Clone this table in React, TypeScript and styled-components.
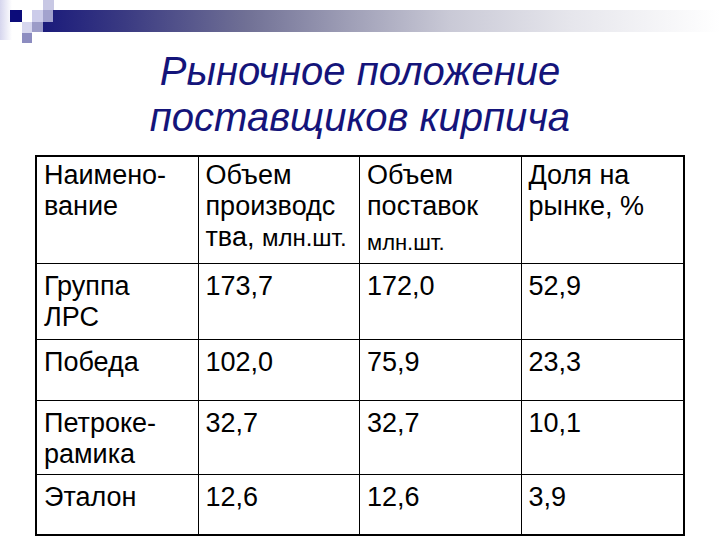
import React from "react";
import styled, { createGlobalStyle } from "styled-components";

const GlobalStyle = createGlobalStyle`
  html, body {
    margin: 0;
    padding: 0;
    background: #ffffff;
  }
  body {
    font-family: "Liberation Sans", Arial, sans-serif;
  }
`;

interface Row {
  name: string[];
  produced: string;
  supplied: string;
  share: string;
  height: number;
}

const rows: Row[] = [
  { name: ["Группа", "ЛРС"], produced: "173,7", supplied: "172,0", share: "52,9", height: 76 },
  { name: ["Победа"], produced: "102,0", supplied: "75,9", share: "23,3", height: 61 },
  { name: ["Петроке-", "рамика"], produced: "32,7", supplied: "32,7", share: "10,1", height: 74 },
  { name: ["Эталон"], produced: "12,6", supplied: "12,6", share: "3,9", height: 59 },
];

const Decoration: React.FC = () => (
  <DecorationSvg viewBox="0 0 720 44" width={720} height={44}>
    <defs>
      <linearGradient id="barFade" x1="0" y1="0" x2="1" y2="0">
        <stop offset="0" stopColor="#1b1b7b" />
        <stop offset="0.12" stopColor="#3a3a82" />
        <stop offset="0.3" stopColor="#707095" />
        <stop offset="0.45" stopColor="#9e9eb6" />
        <stop offset="0.6" stopColor="#c9c9d6" />
        <stop offset="0.78" stopColor="#e6e6ec" />
        <stop offset="1" stopColor="#ffffff" />
      </linearGradient>
      <linearGradient id="edgeFade" x1="0" y1="0" x2="1" y2="0">
        <stop offset="0" stopColor="#d6d6ee" />
        <stop offset="1" stopColor="#ffffff" />
      </linearGradient>
    </defs>
    <rect x="0" y="0" width="12" height="40" fill="url(#edgeFade)" />
    <rect x="43" y="0" width="11" height="10" fill="#c8c8e4" />
    <rect x="43" y="10" width="677" height="22" fill="url(#barFade)" />
    <rect x="10" y="10" width="12" height="12" fill="#0c0c7a" />
    <rect x="32" y="10" width="11" height="12" fill="#ccccea" />
    <rect x="43" y="10" width="10" height="12" fill="#a2a2ce" />
    <rect x="22" y="22" width="10" height="11" fill="#d6d6ee" />
    <rect x="32" y="22" width="11" height="10" fill="#9c9cc8" />
    <rect x="22" y="33" width="10" height="10" fill="#8c8cc0" />
  </DecorationSvg>
);

export default function App() {
  return (
    <>
      <GlobalStyle />
      <Slide>
        <Decoration />
        <Title>
          Рыночное положение
          <br />
          поставщиков кирпича
        </Title>
        <Table>
          <Cell $height={107}>
            Наимено-
            <br />
            вание
          </Cell>
          <Cell $height={107}>
            Объем
            <br />
            производс
            <br />
            тва, <Unit $size={24}>млн.шт.</Unit>
          </Cell>
          <Cell $height={107}>
            Объем
            <br />
            поставок
            <br />
            <Unit $size={22} $lower>млн.шт.</Unit>
          </Cell>
          <Cell $height={107} $last>
            Доля на
            <br />
            рынке, %
          </Cell>
          {rows.map((row, i) => {
            const bottom = i === rows.length - 1;
            return (
              <React.Fragment key={row.name.join("")}>
                <BodyCell $height={row.height} $bottom={bottom}>
                  {row.name.map((line, j) => (
                    <React.Fragment key={line}>
                      {j > 0 && <br />}
                      {line}
                    </React.Fragment>
                  ))}
                </BodyCell>
                <BodyCell $height={row.height} $bottom={bottom}>
                  {row.produced}
                </BodyCell>
                <BodyCell $height={row.height} $bottom={bottom}>
                  {row.supplied}
                </BodyCell>
                <BodyCell $height={row.height} $bottom={bottom} $last>
                  {row.share}
                </BodyCell>
              </React.Fragment>
            );
          })}
        </Table>
      </Slide>
    </>
  );
}

const Slide = styled.div`
  width: 720px;
  height: 540px;
  display: flex;
  flex-direction: column;
  overflow: hidden;
  background: #ffffff;
`;

const DecorationSvg = styled.svg`
  display: block;
  flex: none;
`;

const Title = styled.h1`
  margin: 4px 0 0;
  font-family: "Liberation Sans", Arial, sans-serif;
  font-style: italic;
  font-weight: 400;
  font-size: 40px;
  line-height: 46px;
  color: #14147a;
  text-align: center;
`;

const Table = styled.div`
  margin: 15px 0 0 35px;
  width: 650px;
  box-sizing: border-box;
  border: 2px solid #000000;
  display: grid;
  grid-template-columns: repeat(4, 1fr);
  font-family: "Liberation Sans", Arial, sans-serif;
  font-size: 27px;
  line-height: 31px;
  color: #000000;
`;

const Cell = styled.div<{ $height: number; $last?: boolean; $bottom?: boolean }>`
  box-sizing: border-box;
  height: ${(p) => p.$height}px;
  padding: 3px 6px 0 7px;
  border-right: ${(p) => (p.$last ? "none" : "1px solid #000000")};
  border-bottom: ${(p) => (p.$bottom ? "none" : "1px solid #000000")};
  white-space: nowrap;
  overflow: hidden;
`;

const BodyCell = styled(Cell)`
  padding-top: 7px;
`;

const Unit = styled.span<{ $size: number; $lower?: boolean }>`
  font-size: ${(p) => p.$size}px;
  position: relative;
  top: ${(p) => (p.$lower ? "4px" : "0")};
`;
